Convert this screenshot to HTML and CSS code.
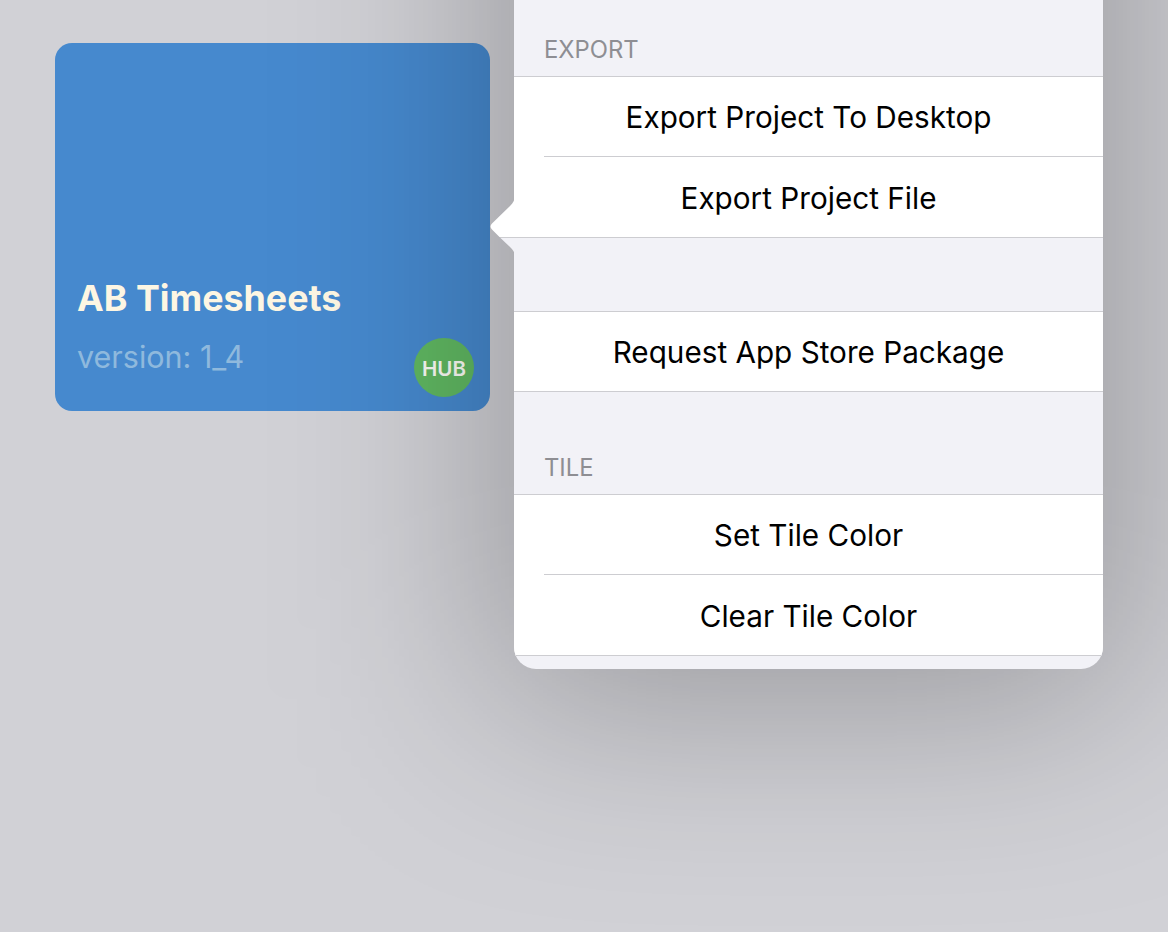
FILE: index.html
```html
<!DOCTYPE html>
<html lang="en">
<head>
<meta charset="utf-8">
<title>Project menu</title>
<link rel="stylesheet" href="styles.css">
</head>
<body>
<main class="stage">
  <article class="tile">
    <h2 class="tile-title">AB Timesheets</h2>
    <p class="tile-version">version: 1_4</p>
    <span class="hub-badge">HUB</span>
  </article>
  <section class="popover">
    <div class="sheet">
      <h3 class="section-head head-export">EXPORT</h3>
      <ul class="group">
        <li class="row">Export Project To Desktop</li>
        <li class="row">Export Project File</li>
      </ul>
      <div class="gap-plain"></div>
      <ul class="group">
        <li class="row">Request App Store Package</li>
      </ul>
      <h3 class="section-head head-tile">TILE</h3>
      <ul class="group">
        <li class="row">Set Tile Color</li>
        <li class="row">Clear Tile Color</li>
      </ul>
      <div class="foot"></div>
    </div>
    <svg class="arrow" width="25" height="62" viewBox="0 0 25 62" aria-hidden="true">
      <path class="arrow-top" d="M25 0C25 5 23 8 20 11L2 28.5C0 30.5 0 32.5 2 34.5L9.5 42H25Z"/>
      <path class="arrow-bottom" d="M10.5 43L20 52C23 55 25 57 25 62V43Z"/>
      <path class="arrow-line" d="M9.5 42H25V43H10.5Z"/>
    </svg>
  </section>
</main>
</body>
</html>
```
FILE: styles.css
```css
* { box-sizing: border-box; }
html, body { margin: 0; height: 100%; }
body {
  background: #d1d1d6;
  font-family: Inter, "Liberation Sans", sans-serif;
  overflow: hidden;
}
.stage {
  display: flex;
  align-items: flex-start;
  gap: 24px;
  padding-left: 55px;
  height: 932px;
}
.tile {
  position: relative;
  flex: none;
  width: 435px;
  height: 368px;
  margin-top: 43px;
  padding: 233px 22px 0;
  border-radius: 17px;
  background: #4689ce;
}
.tile-title {
  margin: 0;
  font-size: 35.8px;
  line-height: 44px;
  font-weight: 700;
  color: #fdf6e3;
}
.tile-version {
  margin: 19px 0 0;
  font-size: 30.5px;
  line-height: 36px;
  font-weight: 400;
  color: #8fb9dd;
}
.hub-badge {
  position: absolute;
  right: 16px;
  bottom: 14px;
  display: flex;
  align-items: center;
  justify-content: center;
  width: 60px;
  height: 59px;
  padding-top: 1px;
  border-radius: 50%;
  background: #60b862;
  color: #fbfcf6;
  font-size: 20.5px;
  font-weight: 600;
}
.popover {
  position: relative;
  flex: none;
  width: 589px;
  height: 969px;
  margin-top: -300px;
}
.popover::before {
  content: "";
  position: absolute;
  inset: 10px -20px -30px;
  border-radius: 22px;
  background: rgba(0, 0, 0, 0.28);
  filter: blur(105px);
}
.arrow {
  position: absolute;
  left: -24px;
  top: 495px;
  display: block;
}
.arrow-top { fill: #fff; }
.arrow-bottom { fill: #f2f2f7; }
.arrow-line { fill: #cdcdd1; }
.sheet {
  position: relative;
  height: 100%;
  padding-top: 300px;
  border-radius: 22px;
  overflow: hidden;
  background: #f2f2f7;
}
.section-head {
  margin: 0;
  padding-left: 30px;
  font-size: 23.8px;
  line-height: 30px;
  font-weight: 400;
  color: #8e8e93;
}
.head-export { padding-top: 35px; height: 76px; }
.head-tile { padding-top: 61px; height: 102px; }
.gap-plain { height: 73px; }
.group {
  margin: 0;
  padding: 0;
  list-style: none;
  background: #fff;
  border-top: 1px solid #cdcdd1;
  border-bottom: 1px solid #cdcdd1;
}
.row {
  height: 79px;
  display: flex;
  align-items: center;
  justify-content: center;
  font-size: 29.7px;
  color: #000;
}
.row + .row {
  height: 81px;
  margin-left: 30px;
  padding-top: 1px;
  padding-right: 30px;
  border-top: 1px solid #cdcdd1;
}
.foot { height: 13px; }
```
